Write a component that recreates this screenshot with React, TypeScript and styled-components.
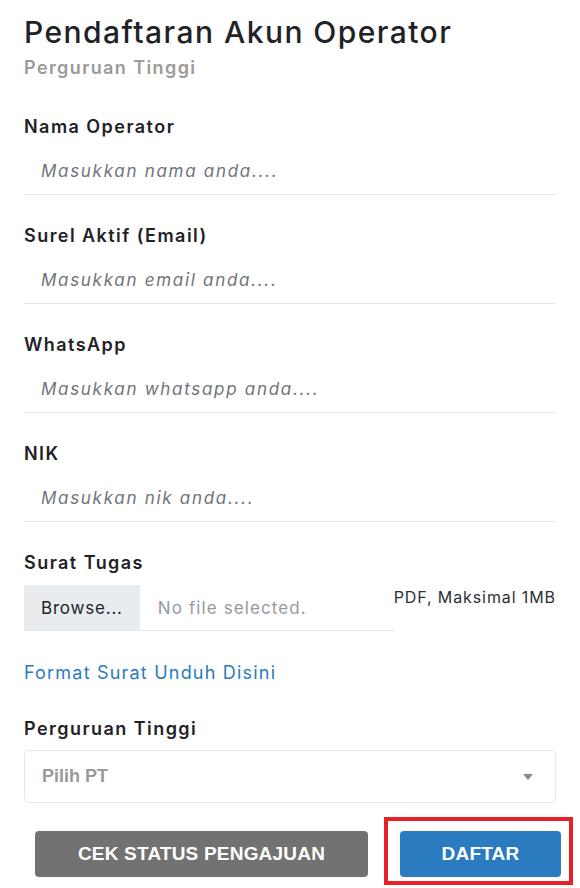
import React from "react";
import styled, { createGlobalStyle } from "styled-components";

const Global = createGlobalStyle`
  html, body { margin: 0; padding: 0; background: #ffffff; }
  body { font-family: Inter, "Noto Sans", sans-serif; color: #212529; overflow: hidden; }
  * { box-sizing: border-box; }
`;

const Page = styled.div`
  width: 580px;
  padding: 14px 24px 0 24px;
  display: flex;
  flex-direction: column;
`;

const Title = styled.h1`
  margin: 0;
  font-size: 30px;
  line-height: 36px;
  font-weight: 500;
  color: #1f2226;
  letter-spacing: 1.45px;
`;

const Subtitle = styled.div`
  font-size: 18px;
  line-height: 24px;
  font-weight: 600;
  color: #9a9a9a;
  letter-spacing: 1.4px;
  margin-top: 6px;
  margin-bottom: 35px;
`;

const Field = styled.div<{ $gap?: number }>`
  display: flex;
  flex-direction: column;
  margin-bottom: ${(p) => (p.$gap ?? 29)}px;
`;

const Label = styled.label`
  font-size: 18px;
  line-height: 24px;
  font-weight: 600;
  color: #1f2226;
  letter-spacing: 1.45px;
  margin-bottom: 8px;
`;

const TextInput = styled.input`
  height: 48px;
  border: none;
  border-bottom: 1px solid #e3e9e9;
  padding: 0 17px;
  font-family: inherit;
  font-size: 17px;
  letter-spacing: 1.7px;
  color: #212529;
  outline: none;
  background: transparent;
  &::placeholder {
    font-style: italic;
    color: #6f747a;
    font-weight: 400;
  }
`;

const FileRow = styled.div`
  display: flex;
  align-items: flex-start;
  margin-top: 2px;
`;

const FileBox = styled.div`
  display: flex;
  align-items: center;
  width: 370px;
  height: 46px;
  border-bottom: 1px solid #e3e9e9;
`;

const BrowseButton = styled.span`
  display: flex;
  align-items: center;
  height: 100%;
  padding: 0 17px;
  background: #e9ecef;
  color: #212529;
  font-size: 17px;
  letter-spacing: 0.8px;
`;

const NoFile = styled.span`
  padding-left: 18px;
  font-size: 17px;
  letter-spacing: 1.1px;
  color: #969a9e;
`;

const Hint = styled.span`
  font-size: 16px;
  line-height: 24px;
  color: #2b2f33;
  letter-spacing: 0.9px;
  white-space: nowrap;
`;

const Link = styled.a`
  font-size: 18px;
  line-height: 24px;
  color: #2a7bc0;
  letter-spacing: 1.2px;
  text-decoration: none;
  margin-top: 30px;
  margin-bottom: 32px;
`;

const SelectBox = styled.div`
  height: 53px;
  margin-top: 1px;
  border: 1px solid #e3e9e9;
  border-radius: 5px;
  display: flex;
  align-items: center;
  justify-content: space-between;
  padding: 0 22px 0 17px;
`;

const SelectText = styled.span`
  font-family: "Liberation Sans", Arial, sans-serif;
  font-weight: 700;
  font-size: 18px;
  color: #9a9a9a;
`;

const Caret = styled.span`
  width: 0;
  height: 0;
  border-left: 5px solid transparent;
  border-right: 5px solid transparent;
  border-top: 6px solid #8a8a8a;
`;

const ButtonRow = styled.div`
  display: flex;
  align-items: flex-start;
  margin-top: 14px;
  padding-left: 11px;
`;

const Button = styled.button<{ $variant: "gray" | "blue"; $width: number }>`
  display: block;
  flex-shrink: 0;
  width: ${(p) => p.$width}px;
  height: 46px;
  margin-top: ${(p) => (p.$variant === "gray" ? 14 : 0)}px;
  border: none;
  border-radius: 4px;
  background: ${(p) => (p.$variant === "gray" ? "#727272" : "#2a7bc0")};
  color: #ffffff;
  font-family: "Liberation Sans", Arial, sans-serif;
  font-weight: 700;
  font-size: 19px;
  letter-spacing: 0.2px;
  text-transform: uppercase;
`;

const Highlight = styled.div`
  display: flex;
  flex-shrink: 0;
  margin-left: 16px;
  padding: 10px 8px 4px 12px;
  border: 4px solid #e8202a;
`;

export default function App() {
  return (
    <>
      <Global />
      <Page>
        <Title>Pendaftaran Akun Operator</Title>
        <Subtitle>Perguruan Tinggi</Subtitle>

        <Field>
          <Label>Nama Operator</Label>
          <TextInput placeholder="Masukkan nama anda...." />
        </Field>
        <Field>
          <Label>Surel Aktif (Email)</Label>
          <TextInput placeholder="Masukkan email anda...." />
        </Field>
        <Field>
          <Label>WhatsApp</Label>
          <TextInput placeholder="Masukkan whatsapp anda...." />
        </Field>
        <Field>
          <Label>NIK</Label>
          <TextInput placeholder="Masukkan nik anda...." />
        </Field>

        <Field $gap={0}>
          <Label>Surat Tugas</Label>
          <FileRow>
            <FileBox>
              <BrowseButton>Browse...</BrowseButton>
              <NoFile>No file selected.</NoFile>
            </FileBox>
            <Hint>PDF, Maksimal 1MB</Hint>
          </FileRow>
        </Field>

        <Link href="#">Format Surat Unduh Disini</Link>

        <Field $gap={0}>
          <Label>Perguruan Tinggi</Label>
          <SelectBox>
            <SelectText>Pilih PT</SelectText>
            <Caret />
          </SelectBox>
        </Field>

        <ButtonRow>
          <Button $variant="gray" $width={333}>Cek Status Pengajuan</Button>
          <Highlight>
            <Button $variant="blue" $width={161}>Daftar</Button>
          </Highlight>
        </ButtonRow>
      </Page>
    </>
  );
}
